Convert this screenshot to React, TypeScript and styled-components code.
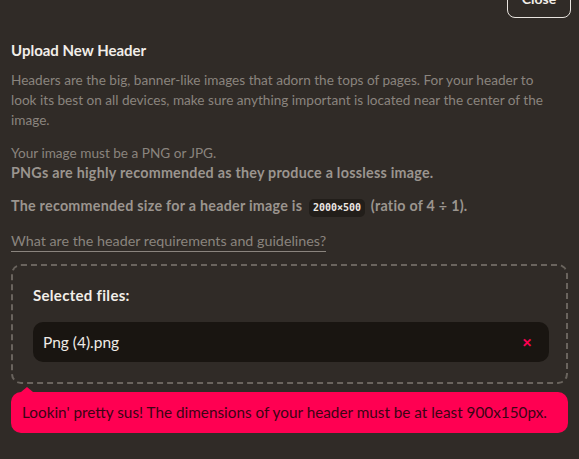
import { createGlobalStyle, styled } from 'styled-components';

const colors = {
  bg: '#302b27',
  text: '#8a847e',
  strong: '#9b958f',
  title: '#f2eee9',
  border: '#6a645e',
  pill: '#191511',
  code: '#221e1a',
  error: '#ff0052',
  errorText: '#3b0414',
};

const GlobalStyle = createGlobalStyle`
  body {
    margin: 0;
    background: ${colors.bg};
    font-family: Lato, "Open Sans", sans-serif;
  }
`;

const Page = styled.div`
  width: 579px;
  height: 459px;
  overflow: hidden;
  background: ${colors.bg};
  padding: 0 11px;
  box-sizing: border-box;
`;

const TopBar = styled.div`
  display: flex;
  justify-content: flex-end;
  margin-top: -22px;
  margin-right: -3px;
`;

const CloseButton = styled.button`
  background: transparent;
  border: 1px solid #e8e4df;
  border-radius: 8px;
  color: ${colors.title};
  font: 700 14px Lato, sans-serif;
  width: 64px;
  height: 40px;
`;

const Title = styled.h2`
  margin: 22px 0 10px;
  font-size: 15px;
  line-height: 20px;
  font-weight: 700;
  color: ${colors.title};
`;

const Text = styled.p`
  margin: 0 0 13px;
  font-size: 13.6px;
  line-height: 20px;
  color: ${colors.text};

  strong {
    color: ${colors.strong};
    font-weight: 700;
    font-size: 14.3px;
    letter-spacing: 0.25px;
  }
`;

const Code = styled.code`
  display: inline-block;
  font-family: "DejaVu Sans Mono", monospace;
  font-size: 10px;
  line-height: 18px;
  font-weight: 700;
  letter-spacing: 0;
  color: #ece8e3;
  background: ${colors.code};
  border-radius: 5px;
  padding: 0 4px;
  margin: 0 2px 0 3px;
`;

const Link = styled.a`
  display: inline-block;
  color: ${colors.text};
  font-size: 14.3px;
  line-height: 21px;
  text-decoration: none;
  border-bottom: 1px solid ${colors.text};
  margin-bottom: 12px;
`;

const DropZone = styled.div`
  border: 2px dashed ${colors.border};
  border-radius: 10px;
  padding: 19px 17px 20px 20px;
  display: flex;
  flex-direction: column;
  gap: 17px;
`;

const Label = styled.div`
  font-size: 15px;
  line-height: 20px;
  font-weight: 700;
  letter-spacing: 0.3px;
  color: ${colors.title};
`;

const FilePill = styled.div`
  display: flex;
  align-items: center;
  justify-content: space-between;
  background: ${colors.pill};
  border-radius: 10px;
  height: 40px;
  padding: 0 17px 0 10px;
  color: #efebe6;
  font-size: 15.5px;
`;

const Remove = styled.span`
  color: ${colors.error};
  font-size: 12px;
  font-weight: 700;
`;

const ErrorBubble = styled.div`
  position: relative;
  margin-top: 8px;
  background: ${colors.error};
  border-radius: 10px;
  padding: 11px 11px;
  color: ${colors.errorText};
  font-size: 15.3px;
  line-height: 19px;

  &::before {
    content: '';
    position: absolute;
    top: -5px;
    left: 10px;
    border-left: 6px solid transparent;
    border-right: 6px solid transparent;
    border-bottom: 5px solid ${colors.error};
  }
`;

export default function App() {
  return (
    <Page>
      <GlobalStyle />
      <TopBar>
        <CloseButton>Close</CloseButton>
      </TopBar>
      <Title>Upload New Header</Title>
      <Text>
        Headers are the big, banner-like images that adorn the tops of pages. For your header to
        <br />
        look its best on all devices, make sure anything important is located near the center of
        the image.
      </Text>
      <Text>
        Your image must be a PNG or JPG.
        <br />
        <strong>PNGs are highly recommended as they produce a lossless image.</strong>
      </Text>
      <Text>
        <strong>
          The recommended size for a header image is <Code>2000×500</Code> (ratio of 4 ÷ 1).
        </strong>
      </Text>
      <Link href="#">What are the header requirements and guidelines?</Link>
      <DropZone>
        <Label>Selected files:</Label>
        <FilePill>
          Png (4).png
          <Remove>✕</Remove>
        </FilePill>
      </DropZone>
      <ErrorBubble>
        Lookin' pretty sus! The dimensions of your header must be at least 900x150px.
      </ErrorBubble>
    </Page>
  );
}
